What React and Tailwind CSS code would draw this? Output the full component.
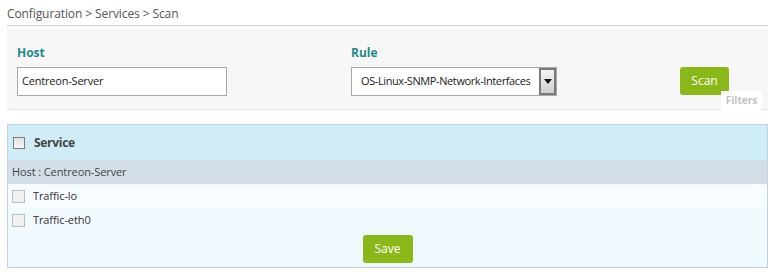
import React from 'react';

const Box = ({ dark }) => (
  <span
    className={
      dark
        ? 'inline-block shrink-0 w-[12px] h-[12px] border border-[#7d7d7d] bg-gradient-to-b from-[#e2e2e2] to-[#f7f7f7]'
        : 'inline-block shrink-0 w-[13px] h-[13px] border border-[#bdbdbd] bg-[#f1f1f1]'
    }
  />
);

const App = () => {
  return (
    <div
      className="w-full h-[277px] bg-white text-[11px] tracking-[-0.1px] text-[#333]"
      style={{ fontFamily: '"Open Sans", "DejaVu Sans", sans-serif' }}
    >
      <div className="mx-[7px] h-[26px] pt-[5px] border-b border-[#cfcfcf] text-[12px] tracking-[-0.1px] text-[#555] leading-[18px]">
        Configuration &gt; Services &gt; Scan
      </div>

      <div className="relative mx-[7px] mt-[3px] h-[81px] bg-[#f7f7f7] border-b border-[#e3e3e3] flex items-start pt-[16px]">
        <div className="ml-[10px] w-[210px]">
          <div className="font-bold text-[12px] tracking-normal text-[#1f8a8c] leading-[16px] h-[22px]">Host</div>
          <div className="h-[29px] border border-[#a9a9a9] bg-white flex items-center px-[4px] text-[#222] tracking-[-0.2px]">
            Centreon-Server
          </div>
        </div>
        <div className="ml-[124px] w-[206px]">
          <div className="font-bold text-[12px] tracking-normal text-[#1f8a8c] leading-[16px] h-[22px]">Rule</div>
          <div className="h-[29px] border border-[#a9a9a9] bg-white flex items-center text-[#222] overflow-hidden">
            <span className="flex-1 pl-[9px] whitespace-nowrap overflow-hidden tracking-[-0.4px]">OS-Linux-SNMP-Network-Interfaces</span>
            <span className="shrink-0 w-[17px] h-[27px] border-2 border-[#7a7a7a] bg-gradient-to-b from-[#f4f4f4] to-[#cfcfcf] flex items-center justify-center">
              <svg width="8" height="5" viewBox="0 0 8 5">
                <path d="M0 0 L8 0 L4 5 Z" fill="#111" />
              </svg>
            </span>
          </div>
        </div>
        <button className="ml-[123px] mt-[22px] w-[49px] h-[28px] rounded-[3px] bg-[#8ab818] text-white text-[12px] tracking-normal">
          Scan
        </button>
        <div className="absolute right-[6px] bottom-[-1px] w-[41px] h-[19px] bg-white text-[10px] tracking-normal font-bold text-[#c2c2c2] flex items-center justify-center">
          Filters
        </div>
      </div>

      <div className="mx-[7px] mt-[14px] border border-[#c3d3e2]">
        <div className="h-[35px] bg-[#d0ecf7] flex items-center pl-[5px]">
          <Box dark />
          <span className="ml-[9px] font-bold text-[12px] tracking-[-0.3px] text-[#444]">Service</span>
        </div>
        <div className="h-[24px] bg-[#d4dee8] flex items-center pl-[4px] text-[#444]">Host : Centreon-Server</div>
        <div className="h-[24px] bg-[#f6fcff] flex items-center pl-[4px]">
          <Box />
          <span className="ml-[8px]">Traffic-lo</span>
        </div>
        <div className="h-[24px] bg-[#f0f9fe] flex items-center pl-[4px]">
          <Box />
          <span className="ml-[8px]">Traffic-eth0</span>
        </div>
        <div className="h-[35px] bg-[#f0f9fe] flex justify-center pt-[3px]">
          <button className="w-[50px] h-[28px] rounded-[3px] bg-[#8ab818] text-white text-[12px] tracking-normal">Save</button>
        </div>
      </div>
    </div>
  );
};

export default App;
